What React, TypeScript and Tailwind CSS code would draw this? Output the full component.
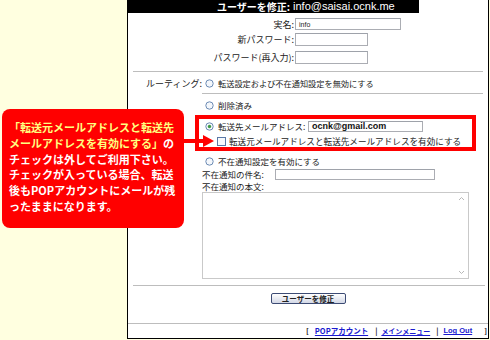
import React from "react";

function Radio({ checked }: { checked?: boolean }) {
  return (
    <svg width="9" height="9" viewBox="0 0 9 9" className="shrink-0">
      <circle cx="4.5" cy="4.5" r="3.7" fill="#f4f7fb" stroke="#6c8bb4" strokeWidth="1" />
      {checked && <circle cx="4.5" cy="4.5" r="1.7" fill="#3d9a44" />}
    </svg>
  );
}

function Checkbox() {
  return (
    <svg width="9" height="9" viewBox="0 0 9 9" className="shrink-0">
      <rect x="0.5" y="0.5" width="8" height="8" fill="#f7f9fc" stroke="#5a78a6" strokeWidth="1" />
    </svg>
  );
}

function Input({ w, h, children }: { w: string; h: string; children?: React.ReactNode }) {
  return (
    <div className={`${w} ${h} border border-[#abadb3] border-t-[#9ea2aa] bg-white flex items-center pl-[3px] overflow-hidden`}>
      {children}
    </div>
  );
}

export default function App() {
  return (
    <div className="w-[490px] h-[340px] bg-[#ffffe0] flex relative overflow-hidden font-['Noto_Sans_CJK_JP','Liberation_Sans',sans-serif] text-[#222] leading-none">
      <div className="w-[127px] shrink-0" />
      <div className="w-[362px] h-[339px] shrink-0 border-l border-r border-b border-black bg-white flex flex-col overflow-hidden">
        {/* header */}
        <div className="flex h-[13px] shrink-0">
          <div className="w-[291px] h-[13px] bg-black text-white flex items-center pl-[89px] whitespace-nowrap">
            <span className="font-bold text-[10px] leading-[13px]">ユーザーを修正:</span>
            <span className="ml-[3px] text-[11px] leading-[13px] font-['Liberation_Sans',sans-serif]">info@saisai.ocnk.me</span>
          </div>
        </div>

        {/* account rows */}
        <div className="flex items-center mt-[5px] h-[12px]">
          <div className="w-[167px] text-right text-[9px] pr-[1px]">実名:</div>
          <Input w="w-[106px]" h="h-[12px]">
            <span className="text-[7px] font-['Liberation_Sans',sans-serif]">info</span>
          </Input>
        </div>
        <div className="flex items-center mt-[3px] h-[13px]">
          <div className="w-[167px] text-right text-[9px] pr-[1px]">新パスワード:</div>
          <Input w="w-[73px]" h="h-[13px]" />
        </div>
        <div className="flex items-center mt-[5px] h-[13px]">
          <div className="w-[167px] text-right text-[9px] pr-[1px] whitespace-nowrap">パスワード(再入力):</div>
          <Input w="w-[73px]" h="h-[13px]" />
        </div>

        <div className="mt-[7px] ml-[5px] mr-[5px] h-px bg-[#bdbdbd] shrink-0" />

        {/* routing */}
        <div className="flex">
          <div className="w-[74px] shrink-0 mt-[4px] h-[14px] flex items-center justify-end text-[9px] whitespace-nowrap">ルーティング:</div>
          <div className="w-[281px] flex flex-col">
            <div className="mt-[4px] h-[14px] flex items-center gap-[4px] pl-[3px] text-[8.2px] whitespace-nowrap">
              <Radio />
              <span>転送設定および不在通知設定を無効にする</span>
            </div>
            <div className="mt-[3px] h-px bg-[#bdbdbd]" />
            <div className="mt-[4px] h-[14px] flex items-center gap-[4px] pl-[3px] text-[8.5px] whitespace-nowrap">
              <Radio />
              <span>削除済み</span>
            </div>
            <div className="mt-[3px] -ml-[7px] w-[281px] h-[36px] border-[4px] border-[#ff0000] flex flex-col">
              <div className="mt-[1px] h-[12px] flex items-center pl-[6px] text-[8.5px] whitespace-nowrap">
                <Radio checked />
                <span className="ml-[4px]">転送先メールアドレス:</span>
                <div className="ml-auto mr-[49px]">
                  <Input w="w-[115px]" h="h-[11px]">
                    <span className="text-[9px] font-semibold font-['Liberation_Sans',sans-serif] text-[#111]">ocnk@gmail.com</span>
                  </Input>
                </div>
              </div>
              <div className="mt-[3px] h-[12px] flex items-center pl-[18px] gap-[3px] text-[8.6px] whitespace-nowrap">
                <Checkbox />
                <span>転送元メールアドレスと転送先メールアドレスを有効にする</span>
              </div>
            </div>
            <div className="mt-[3px] h-[14px] flex items-center gap-[4px] pl-[3px] text-[8.5px] whitespace-nowrap">
              <Radio />
              <span>不在通知設定を有効にする</span>
            </div>
            <div className="mt-[1px] h-[11px] flex items-center text-[8.5px] whitespace-nowrap">
              <span className="w-[73px]">不在通知の件名:</span>
              <Input w="w-[160px]" h="h-[11px]" />
            </div>
            <div className="mt-[1px] h-[11px] flex items-center text-[8.5px] whitespace-nowrap">
              不在通知の本文:
            </div>
            <div className="w-[267px] h-[87px] border border-[#c9c9c9] bg-white flex justify-end">
              <div className="w-[11px] flex flex-col justify-between items-center py-[3px] mr-[1px]">
                <svg width="7" height="5" viewBox="0 0 7 5">
                  <path d="M1 4 L3.5 1.5 L6 4" fill="none" stroke="#b8b8b8" strokeWidth="1" />
                </svg>
                <svg width="7" height="5" viewBox="0 0 7 5">
                  <path d="M1 1 L3.5 3.5 L6 1" fill="none" stroke="#b8b8b8" strokeWidth="1" />
                </svg>
              </div>
            </div>
          </div>
        </div>

        <div className="mt-[6px] ml-[5px] mr-[3px] h-px bg-[#bdbdbd] shrink-0" />

        <div className="mt-[7px] flex justify-center">
          <div className="w-[75px] h-[11px] rounded-[2px] border border-[#3c4b74] bg-gradient-to-b from-white to-[#d3d8e6] flex items-center justify-center text-[7.5px] font-bold text-[#222]">
            ユーザーを修正
          </div>
        </div>

        <div className="mt-[19px] h-px bg-[#bdbdbd] shrink-0" />

        <div className="h-[14px] flex items-center justify-end pr-[1px] text-[7.5px] font-bold whitespace-nowrap">
          <span>[</span>
          <span className="ml-[6px] text-[#1a1ad0] underline">POPアカウント</span>
          <span className="ml-[7px]">|</span>
          <span className="ml-[4px] text-[#1a1ad0] underline text-[7px]">メインメニュー</span>
          <span className="ml-[6px]">|</span>
          <span className="ml-[5px] text-[#1a1ad0] underline font-['Liberation_Sans',sans-serif]">Log Out</span>
          <span className="ml-[12px]">]</span>
        </div>
      </div>

      {/* callout */}
      <div className="absolute left-[2px] top-[109px] w-[182px] h-[119px] rounded-[8px] bg-[#ff0000] pl-[7px] pt-[11px] text-[11px] font-bold leading-[15.8px] whitespace-nowrap">
        <div className="text-[#ffff80]">「転送元メールアドレスと転送先</div>
        <div>
          <span className="text-[#ffff80]">メールアドレスを有効にする」</span>
          <span className="text-white">の</span>
        </div>
        <div className="text-white">チェックは外してご利用下さい。</div>
        <div className="text-white">チェックが入っている場合、転送</div>
        <div className="text-white">後もPOPアカウントにメールが残</div>
        <div className="text-white">ったままになります。</div>
      </div>
      <svg className="absolute left-[183px] top-[134px]" width="32" height="14" viewBox="0 0 32 14">
        <rect x="0" y="5" width="21" height="4" fill="#ff0000" />
        <path d="M20 1 L31 7 L20 13 Z" fill="#ff0000" />
      </svg>
    </div>
  );
}
